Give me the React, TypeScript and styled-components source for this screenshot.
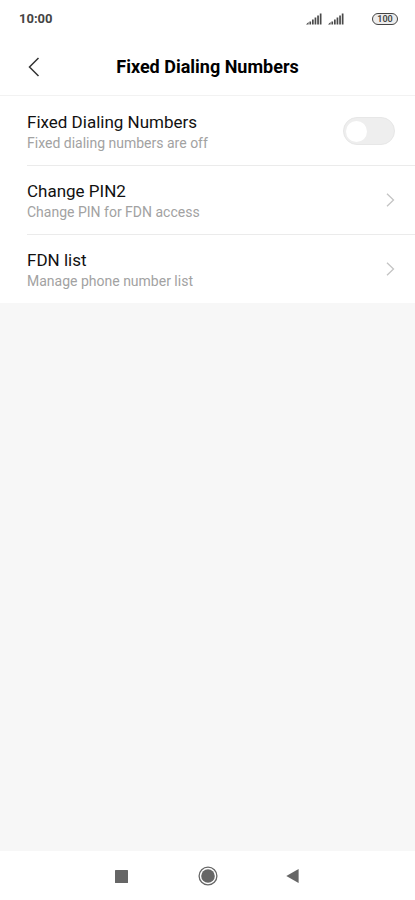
import React, { useState } from "react";
import styled, { createGlobalStyle } from "styled-components";

const GlobalStyle = createGlobalStyle`
  *, *::before, *::after { box-sizing: border-box; }
  body { margin: 0; background: #f7f7f7; }
`;

const Screen = styled.div`
  min-height: 100vh;
  display: flex;
  flex-direction: column;
  background: #f7f7f7;
  color: #111;
  font-family: Roboto, "Liberation Sans", sans-serif;
`;

const StatusBar = styled.div`
  display: flex;
  align-items: center;
  justify-content: space-between;
  height: 38px;
  padding: 0 17px 0 19px;
  background: #fff;
  color: #444;
`;

const Clock = styled.time`
  font-size: 13px;
  line-height: 16px;
  font-weight: 700;
`;

const StatusIcons = styled.div`
  display: flex;
  align-items: center;
  gap: 5px;
`;

const Battery = styled.span`
  display: grid;
  place-items: center;
  width: 26px;
  height: 12px;
  margin-left: 23px;
  border: 1px solid #444;
  border-radius: 6px;
  background: #ededed;
  font-size: 9px;
  line-height: 10px;
  font-weight: 600;
`;

const Header = styled.header`
  display: grid;
  grid-template-columns: 48px 1fr 48px;
  align-items: center;
  height: 58px;
  padding: 0 10px;
  border-bottom: 1px solid #f2f2f2;
  background: #fff;
`;

const IconButton = styled.button`
  display: grid;
  place-items: center;
  width: 48px;
  height: 48px;
  padding: 0;
  border: 0;
  background: none;
  color: #666;
  cursor: pointer;
`;

const Title = styled.h1`
  margin: 0;
  text-align: center;
  font-size: 18px;
  line-height: 24px;
  font-weight: 700;
  color: #000;
`;

const List = styled.ul`
  margin: 0;
  padding: 0 0 0 27px;
  list-style: none;
  background: #fff;
`;

const Item = styled.li`
  border-top: 1px solid #ebebeb;

  &:first-child { border-color: transparent; }
`;

const rowLayout = `
  display: flex;
  align-items: center;
  justify-content: space-between;
  width: 100%;
  height: 68px;
  padding: 0 20px 0 0;
  border: 0;
  background: none;
  font: inherit;
  color: inherit;
  text-align: left;
  cursor: pointer;
`;

const ToggleRow = styled.label`${rowLayout}`;
const LinkRow = styled.button`${rowLayout}`;

const Texts = styled.span`
  display: flex;
  flex-direction: column;
  padding-top: 2px;
`;

const Label = styled.span`
  font-size: 17px;
  line-height: 22px;
`;

const Summary = styled.span`
  font-size: 14px;
  line-height: 20px;
  color: #a2a2a2;
`;

const Switch = styled.input`
  appearance: none;
  display: flex;
  align-items: center;
  width: 52px;
  height: 28px;
  margin: 0;
  padding: 0 2px;
  border: 1px solid #e7e7e7;
  border-radius: 14px;
  background: #eee;
  cursor: pointer;

  &::before {
    content: "";
    width: 21px;
    height: 21px;
    border-radius: 50%;
    background: #fff;
  }

  &:checked {
    justify-content: flex-end;
    background: #3482ff;
  }
`;

const NavBar = styled.nav`
  display: flex;
  align-items: center;
  justify-content: center;
  gap: 37px;
  height: 49px;
  margin-top: auto;
  background: #fff;
`;

const Signal = () => (
  <svg width="17" height="12" viewBox="0 0 17 12" fill="#4a4a4a" aria-hidden="true">
    <path d="M1 11.5 3.6 9V11.5ZM4.4 8.4h1.7v3.1H4.4ZM7 6.6h1.7v4.9H7ZM9.6 4.6h1.7v6.9H9.6ZM12.2 2.6h1.7v8.9h-1.7ZM14.8.6h1.7v10.9h-1.7Z" />
  </svg>
);

const Chevron = () => (
  <svg width="9" height="14" viewBox="0 0 9 14" fill="none" stroke="#c4c4c4" strokeWidth="1.3" aria-hidden="true">
    <path d="M1 .7 7.5 7 1 13.3" />
  </svg>
);

const links = [
  { label: "Change PIN2", summary: "Change PIN for FDN access" },
  { label: "FDN list", summary: "Manage phone number list" },
];

export default function App() {
  const [enabled, setEnabled] = useState(false);

  return (
    <Screen>
      <GlobalStyle />
      <StatusBar>
        <Clock>10:00</Clock>
        <StatusIcons>
          <Signal />
          <Signal />
          <Battery>100</Battery>
        </StatusIcons>
      </StatusBar>
      <Header>
        <IconButton type="button" aria-label="Back">
          <svg width="12" height="20" viewBox="0 0 12 20" fill="none" stroke="#333" strokeWidth="1.5">
            <path d="M10.5 1 1.5 10l9 9" />
          </svg>
        </IconButton>
        <Title>Fixed Dialing Numbers</Title>
      </Header>
      <main>
        <List>
          <Item>
            <ToggleRow>
              <Texts>
                <Label>Fixed Dialing Numbers</Label>
                <Summary>Fixed dialing numbers are {enabled ? "on" : "off"}</Summary>
              </Texts>
              <Switch
                type="checkbox"
                role="switch"
                checked={enabled}
                onChange={(event) => setEnabled(event.target.checked)}
              />
            </ToggleRow>
          </Item>
          {links.map((link) => (
            <Item key={link.label}>
              <LinkRow type="button">
                <Texts>
                  <Label>{link.label}</Label>
                  <Summary>{link.summary}</Summary>
                </Texts>
                <Chevron />
              </LinkRow>
            </Item>
          ))}
        </List>
      </main>
      <NavBar aria-label="System navigation">
        <IconButton type="button" aria-label="Recent apps">
          <svg width="16" height="14" viewBox="0 0 16 14" fill="currentColor">
            <rect y="1" width="13" height="13" rx=".5" />
          </svg>
        </IconButton>
        <IconButton type="button" aria-label="Home">
          <svg width="20" height="20" viewBox="0 0 20 20" fill="currentColor">
            <circle cx="10" cy="10" r="6.8" />
            <circle cx="10" cy="10" r="8.9" fill="none" stroke="currentColor" strokeWidth="1.3" />
          </svg>
        </IconButton>
        <IconButton type="button" aria-label="Back to previous screen">
          <svg width="13" height="14" viewBox="0 0 13 14" fill="currentColor">
            <path d="M.3 7 12.6 0v14Z" />
          </svg>
        </IconButton>
      </NavBar>
    </Screen>
  );
}
